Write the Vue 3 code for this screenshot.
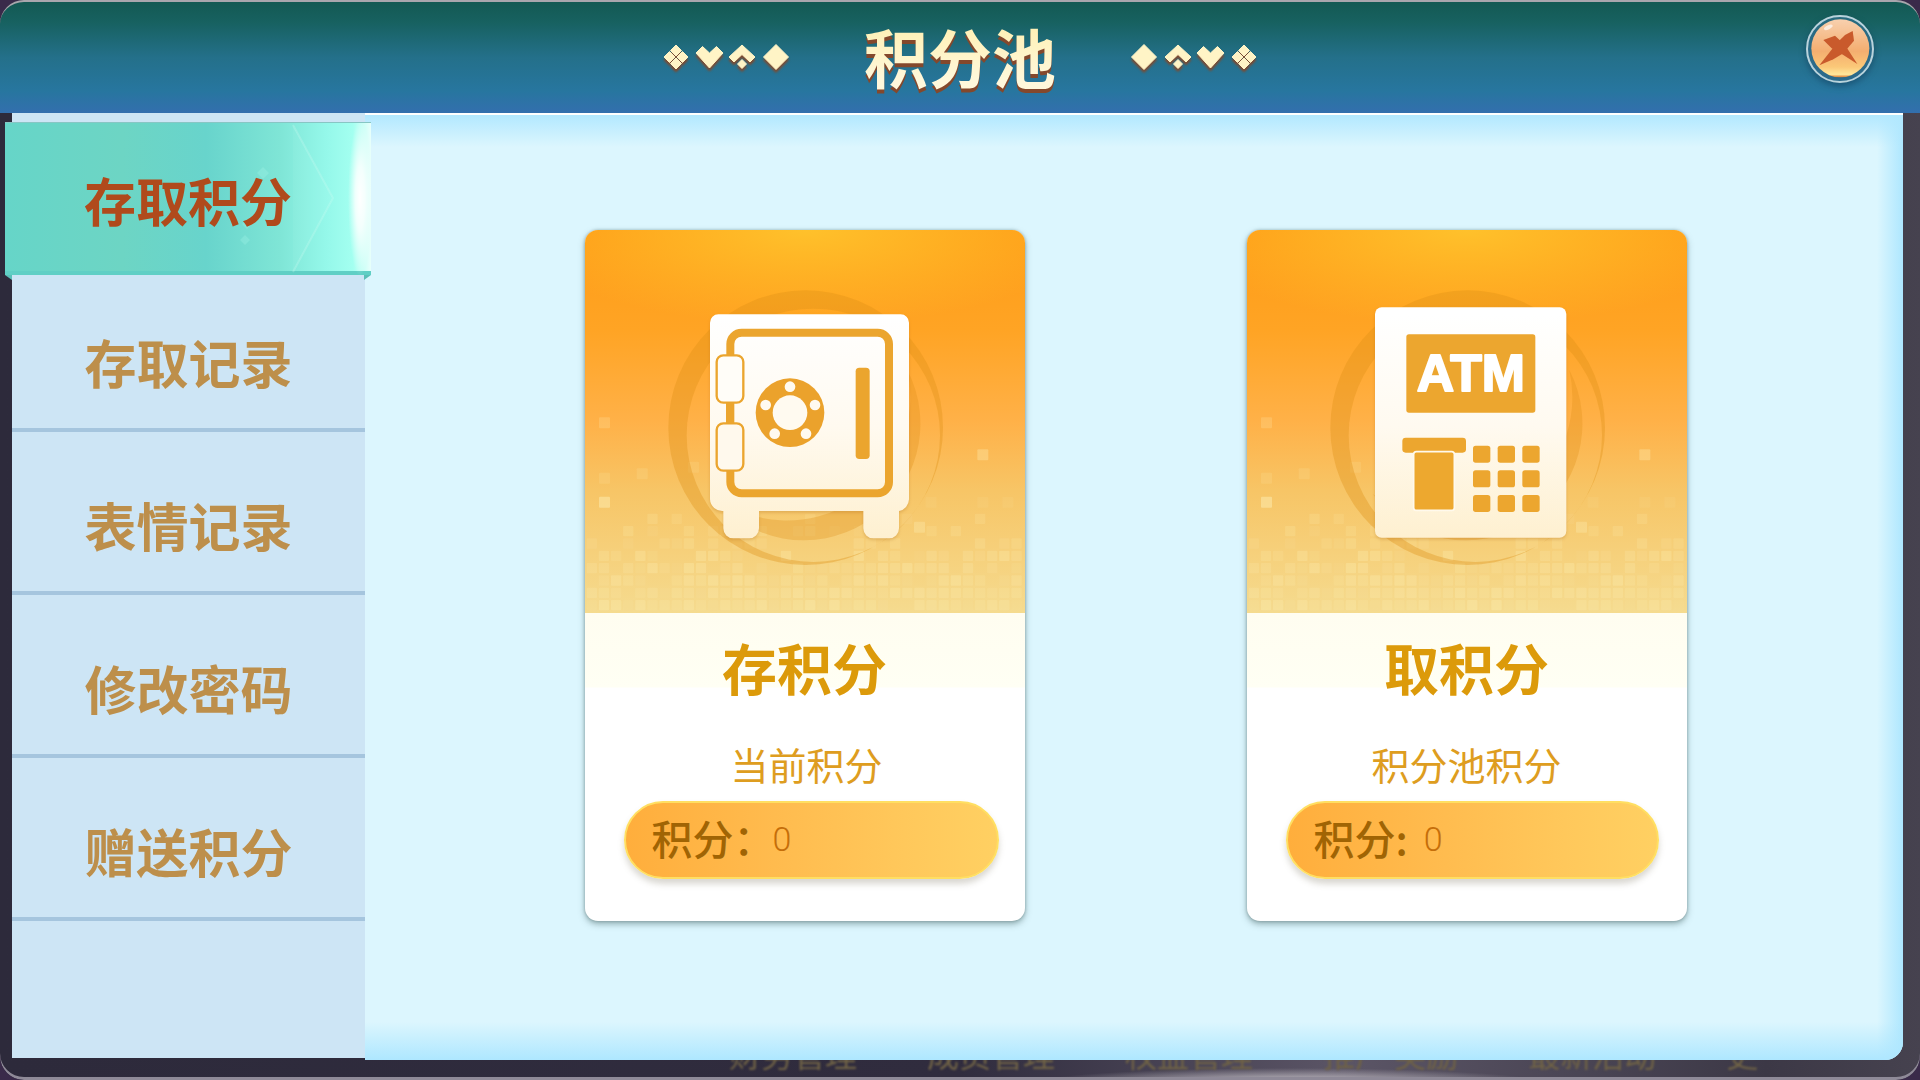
<script setup>
const navItems = ['存取记录', '表情记录', '修改密码', '赠送积分']
const underLabels = ['财务管理', '成员管理', '权益管理', '推广 奖励', '最新活动', '更']

let seed = 20231
function rnd() {
  seed = (seed * 16807) % 2147483647
  return seed / 2147483647
}
const pixels = []
for (let j = 0; j < 8; j++) {
  const y = 1140 - 37 * j
  const chance = j < 5 ? 0.92 - j * 0.06 : 0.46 - (j - 5) * 0.14
  for (let i = 0; i < 36; i++) {
    if (rnd() < chance) {
      pixels.push({
        x: 48 + 36.4 * i,
        y,
        s: 31,
        o: (0.06 + rnd() * (j < 5 ? 0.2 : 0.12)).toFixed(2)
      })
    }
  }
}
const sparse = [
  [85, 592, 0.2], [85, 758, 0.13], [85, 830, 0.42], [198, 745, 0.13],
  [352, 725, 0.12], [1220, 688, 0.3], [1030, 905, 0.28], [1065, 830, 0.08],
  [1220, 830, 0.08], [1295, 830, 0.08]
]
for (const [x, y, o] of sparse) pixels.push({ x, y, s: 33, o })

const dial = [[658, 500], [733, 555], [706, 641], [612, 641], [585, 555]]
const keyX = [728, 802, 876]
const keyY = [677, 751, 825]

const cards = [
  { key: 'save', title: '存积分', sub: '当前积分', colon: '：', cls: 'wide' },
  { key: 'take', title: '取积分', sub: '积分池积分', colon: ':', cls: 'tight' }
]
</script>

<template>
  <div class="page">
    <div class="under">
      <span v-for="label in underLabels" :key="label" class="under-label">{{ label }}</span>
    </div>

    <div class="window">
      <header class="header">
        <svg class="suits" width="126" height="28" viewBox="0 0 126 28">
          <g fill="#fff4c6" stroke="#fff4c6" stroke-width="1" stroke-linejoin="round">
            <path d="M13 1l5.500 5.500-5.500 5.500-5.500-5.500zM6.500 7.500l5.500 5.500-5.500 5.500-5.500-5.500zM19.500 7.500l5.500 5.500-5.500 5.500-5.500-5.500zM13 14l5.500 5.500-5.500 5.500-5.500-5.500z" />
            <path d="M33 9l6.500-6.500 7 6.500 7-6.500 6.500 6.500-13.500 15z" />
            <path d="M79 1l13 12-5 5-8-7.500-8 7.500-5-5zM79 15.500l4.500 4.500-4.500 4.500-4.500-4.500z" />
            <path d="M113 0.500l12.500 12.500-12.500 12.500-12.500-12.500z" />
          </g>
        </svg>
        <h1 class="title">积分池</h1>
        <svg class="suits" width="126" height="28" viewBox="0 0 126 28">
          <g fill="#fff4c6" stroke="#fff4c6" stroke-width="1" stroke-linejoin="round" transform="translate(126 0) scale(-1 1)">
            <path d="M13 1l5.500 5.500-5.500 5.500-5.500-5.500zM6.500 7.500l5.500 5.500-5.500 5.500-5.500-5.500zM19.500 7.500l5.500 5.500-5.500 5.500-5.500-5.500zM13 14l5.500 5.500-5.500 5.500-5.500-5.500z" />
            <path d="M33 9l6.500-6.500 7 6.500 7-6.500 6.500 6.500-13.500 15z" />
            <path d="M79 1l13 12-5 5-8-7.500-8 7.500-5-5zM79 15.500l4.500 4.500-4.500 4.500-4.500-4.500z" />
            <path d="M113 0.500l12.500 12.500-12.500 12.500-12.500-12.500z" />
          </g>
        </svg>

        <svg class="close" width="68" height="68" viewBox="78 45 204 204">
          <defs>
            <linearGradient id="closeDisc" x1="0" y1="0" x2="0" y2="1">
              <stop offset="0" stop-color="#f8d0ae" />
              <stop offset="0.55" stop-color="#f4ae70" />
              <stop offset="0.82" stop-color="#fbc878" />
              <stop offset="0.95" stop-color="#ffe79b" />
              <stop offset="1" stop-color="#d8762c" />
            </linearGradient>
          </defs>
          <circle cx="180" cy="147" r="99" fill="#3d7fa0" fill-opacity="0.55" stroke="#b9d3dc" stroke-width="6" />
          <circle cx="181" cy="145" r="87" fill="url(#closeDisc)" />
          <ellipse cx="145" cy="82" rx="14" ry="6" fill="#fff" fill-opacity="0.65" transform="rotate(-25 145 82)" />
          <path d="M130 120l35-13 30 28 37 57-42-27-35-20z" fill="#c95a2c" />
          <path d="M195 105l23-12 4 29-32 38-30 18-42 18 32-41 20-25z" fill="#c95a2c" />
        </svg>
      </header>

      <div class="body">
        <nav class="sidebar">
          <div class="tab">
            <svg class="tab-art" width="366" height="153" viewBox="0 0 366 153">
              <defs>
                <radialGradient id="tabGlow" cx="0.5" cy="0.5" r="0.5">
                  <stop offset="0" stop-color="#fff" />
                  <stop offset="0.4" stop-color="#fff" stop-opacity="0.8" />
                  <stop offset="1" stop-color="#fff" stop-opacity="0" />
                </radialGradient>
              </defs>
              <path d="M288 2l40 73-40 74" fill="none" stroke="#dffff8" stroke-opacity="0.22" stroke-width="2" />
              <path d="M288 2l40 73-40 74z" fill="#c0fff0" fill-opacity="0.08" />
              <path d="M258 44l6 6-6 6-6-6zM242 96l5 5-5 5-5-5zM240 112l5 5-5 5-5-5z" fill="#b5fff0" fill-opacity="0.22" />
              <ellipse cx="355" cy="75" rx="12" ry="78" fill="url(#tabGlow)" />
            </svg>
            <span class="tab-text">存取积分</span>
            <i class="fold fold-left"></i>
            <i class="fold fold-right"></i>
          </div>
          <div v-for="item in navItems" :key="item" class="nav-item">{{ item }}</div>
        </nav>

        <main class="main">
          <section v-for="card in cards" :key="card.key" class="card">
            <div class="art">
              <svg width="441" height="383" viewBox="43 30 1323 1149">
                <defs>
                  <linearGradient :id="'ivory-' + card.key" gradientUnits="userSpaceOnUse" x1="0" y1="283" x2="0" y2="955">
                    <stop offset="0" stop-color="#ffffff" />
                    <stop offset="0.5" stop-color="#fffaf0" />
                    <stop offset="1" stop-color="#fef0d0" />
                  </linearGradient>
                </defs>
                <rect v-for="(p, i) in pixels" :key="i" :x="p.x" :y="p.y" :width="p.s" :height="p.s" rx="3" fill="#fff6c0" :fill-opacity="p.o" />
                <path fill-rule="evenodd" fill="#dd9016" fill-opacity="0.36"
                  d="M293 623a412 412 0 1 0 824 0a412 412 0 1 0-824 0zM348 646a380 380 0 1 0 760 0a380 380 0 1 0-760 0z" />
                <path fill="#dd9016" fill-opacity="0.3" d="M1010 450A350 350 0 0 1 420 822A370 370 0 0 0 1010 450z" />

                <g v-if="card.key === 'save'" class="icon-shadow">
                  <path :fill="'url(#ivory-' + card.key + ')'"
                    d="M443 283h547a25 25 0 0 1 25 25v530a37 37 0 0 1-30 35v52a30 30 0 0 1-30 30h-47a30 30 0 0 1-30-30v-52h-313v52a30 30 0 0 1-30 30h-47a30 30 0 0 1-30-30v-52a37 37 0 0 1-40-35v-530a25 25 0 0 1 25-25z" />
                  <rect x="479" y="338" width="476" height="482" rx="34" :fill="'url(#ivory-' + card.key + ')'" stroke="#eba52e" stroke-width="24" />
                  <rect x="438" y="406" width="80" height="142" rx="20" fill="#fffdf8" stroke="#eba52e" stroke-width="7" />
                  <rect x="438" y="610" width="80" height="142" rx="20" fill="#fff9ed" stroke="#eba52e" stroke-width="7" />
                  <rect x="466" y="548" width="24" height="62" fill="#eba52e" />
                  <circle cx="658" cy="578" r="103" fill="#eba22c" />
                  <circle cx="658" cy="578" r="52" fill="#fffaf0" />
                  <circle v-for="(d, i) in dial" :key="i" :cx="d[0]" :cy="d[1]" r="16" fill="#fffaf0" />
                  <rect x="855" y="443" width="42" height="274" rx="11" fill="#eba52e" />
                </g>

                <g v-else class="icon-shadow" transform="translate(-7 0)">
                  <rect x="434" y="262" width="574" height="691" rx="20" :fill="'url(#ivory-' + card.key + ')'" />
                  <rect x="528" y="343" width="387" height="235" rx="8" fill="#eca62f" />
                  <text class="atm" x="559" y="513" textLength="325" lengthAdjust="spacingAndGlyphs">ATM</text>
                  <rect x="516" y="653" width="191" height="45" rx="10" fill="#eca62f" />
                  <rect x="550" y="695" width="122" height="176" rx="8" fill="#eda82f" stroke="#fff9ec" stroke-width="5" />
                  <template v-for="kx in keyX" :key="kx">
                    <rect v-for="ky in keyY" :key="ky" :x="kx" :y="ky" width="52" height="51" rx="8" fill="#eca62f" />
                  </template>
                </g>
              </svg>
            </div>

            <div class="lower">
              <h2 class="card-title">{{ card.title }}</h2>
              <p class="card-sub" :class="card.cls">{{ card.sub }}</p>
              <div class="pill" :class="card.cls">
                <span class="pill-label">积分{{ card.colon }}</span>
                <span class="pill-value">0</span>
              </div>
            </div>
          </section>
        </main>
      </div>
    </div>
  </div>
</template>

<style>
html, body { margin: 0; background: #2c2738; }
</style>

<style scoped>
* { box-sizing: border-box; }

.page {
  position: relative;
  width: 1920px;
  height: 1080px;
  overflow: hidden;
  background: #3a2a4a;
  font-family: "Noto Sans CJK SC", "Noto Sans", sans-serif;
}

.under {
  position: absolute;
  inset: 0;
  display: flex;
  align-items: flex-end;
  padding: 0 0 0 729px;
  gap: 70px;
  border-radius: 24px;
  background:
    radial-gradient(ellipse 260px 16px at 1290px 1084px, #d8d4d8, transparent),
    linear-gradient(90deg, #2d2a3b 0%, #302c3e 50%, #5b5566 70%, #3c3846 92%, #46424f 100%);
  box-shadow: inset 0 -3px 0 #8f8a98;
}

.under-label {
  height: 49px;
  font-size: 32px;
  line-height: 44px;
  white-space: pre;
  color: #6f6246;
  filter: blur(0.8px);
}

.window {
  position: relative;
  display: flex;
  flex-direction: column;
  height: 100%;
}

.header {
  position: relative;
  flex: none;
  display: flex;
  align-items: center;
  justify-content: center;
  gap: 75px;
  height: 113px;
  border-top: 2px solid #a9a6ad;
  border-radius: 24px 24px 0 0;
  background: linear-gradient(180deg, #135953 0%, #176160 18%, #24708a 50%, #27769f 80%, #336fae 100%);
}

.suits {
  flex: none;
  margin-top: 1px;
  filter: drop-shadow(0 3px 1px #7d4a30);
}

.title {
  margin: -6px 0 0;
  font-size: 64px;
  font-weight: 700;
  line-height: 76px;
  background: linear-gradient(180deg, #fff0b4 10%, #fff8dc 85%);
  -webkit-background-clip: text;
  background-clip: text;
  color: transparent;
  filter: drop-shadow(0 4px 0 #84482c);
}

.close {
  position: absolute;
  top: 13px;
  left: 1806px;
  filter: drop-shadow(0 3px 3px rgba(10, 40, 70, 0.55));
}

.body {
  flex: 1;
  min-height: 0;
  display: flex;
  padding: 0 17px 20px 12px;
}

.sidebar {
  flex: none;
  width: 353px;
  margin-bottom: 2px;
  padding-top: 9px;
  background: #cde5f5;
}

.tab {
  position: relative;
  z-index: 1;
  display: flex;
  align-items: center;
  justify-content: center;
  width: 366px;
  height: 153px;
  margin: 0 -6px -6px -7px;
  padding-top: 5px;
  border-top: 1px solid #87c6c4;
  border-bottom: 4px solid #60cfc5;
  background: linear-gradient(90deg, #66d5c8 0%, #6dd5c4 32%, #68d4cc 55%, #7fe5d6 75%, #95f8ea 88%, #a3fff0 95%, #e8fffb 100%);
}

.tab-art {
  position: absolute;
  top: 0;
  left: 0;
}

.tab-text {
  position: relative;
  font-size: 52px;
  font-weight: 700;
  line-height: 60px;
  color: #b04a1c;
}

.fold {
  position: absolute;
  bottom: -9px;
  width: 7px;
  height: 5px;
  background: #5bbfb8;
}

.fold-left { left: 0; clip-path: polygon(0 0, 100% 0, 100% 100%); }
.fold-right { right: 0; clip-path: polygon(0 0, 100% 0, 0 100%); }

.nav-item {
  height: 163px;
  padding-top: 63px;
  border-bottom: 4px solid #a5c5de;
  font-size: 52px;
  font-weight: 700;
  line-height: 60px;
  text-align: center;
  color: #bd8f4b;
}

.main {
  flex: 1;
  display: flex;
  justify-content: center;
  gap: 222px;
  padding: 115px 0 0 3px;
  border-top: 2px solid #fff;
  border-radius: 0 0 18px 0;
  background:
    linear-gradient(180deg, #b2e8ff 0, rgba(220, 246, 254, 0) 32px),
    linear-gradient(0deg, #aee7ff 0, rgba(220, 246, 254, 0) 38px),
    linear-gradient(270deg, #aee7ff 0, rgba(220, 246, 254, 0) 26px),
    #dcf6fe;
}

.card {
  flex: none;
  width: 440px;
  height: 691px;
  overflow: hidden;
  border-radius: 13px;
  background: #fff;
  box-shadow: 0 3px 6px rgba(70, 100, 100, 0.5), 0 0 3px rgba(70, 100, 100, 0.4);
}

.art {
  height: 383px;
  background:
    radial-gradient(ellipse 290px 95px at 50% 0, #ffc12b 0%, rgba(255, 190, 40, 0) 100%),
    linear-gradient(180deg, #ff9c17 0%, #ffa424 26%, #ffb148 50%, #f7c566 68%, #f5db8f 100%);
}

.art svg { display: block; }

.icon-shadow { filter: drop-shadow(0 5px 5px rgba(170, 100, 20, 0.28)); }

.atm {
  font-family: "Liberation Sans", sans-serif;
  font-size: 158px;
  font-weight: 700;
  fill: #fff;
  stroke: #fff;
  stroke-width: 6px;
  stroke-linejoin: round;
}

.lower {
  display: flex;
  flex-direction: column;
  align-items: center;
  background: linear-gradient(180deg, #fffdf0 0, #fffff4 74px, #fff 75px);
}

.card-title {
  margin: 13px 0 0;
  font-size: 55px;
  font-weight: 700;
  line-height: 80px;
  color: #dc9a0a;
}

.card-sub {
  margin: 33px 0 0;
  font-size: 38px;
  font-weight: 400;
  line-height: 50px;
  color: #de9d20;
}

.card-sub.wide { transform: translateX(2px); }

.pill {
  align-self: flex-start;
  display: flex;
  align-items: center;
  width: 375px;
  height: 78px;
  margin: 12px 0 0 39px;
  padding-left: 26px;
  border: 2px solid #ffdf62;
  border-radius: 39px;
  background: linear-gradient(90deg, #ffae3c 0%, #ffbb4e 40%, #ffc85b 75%, #ffd062 100%);
  box-shadow: 0 5px 6px rgba(120, 110, 90, 0.28);
}

.pill.tight {
  width: 373px;
  margin-left: 39px;
}

.pill-label {
  margin-bottom: 6px;
  font-size: 41px;
  font-weight: 500;
  line-height: 60px;
  color: #a06404;
}

.pill-value {
  margin-bottom: 2px;
  font-family: Roboto, sans-serif;
  font-size: 34px;
  font-weight: 300;
  line-height: 60px;
  color: #c56e0a;
}

.pill.wide .pill-value { margin-left: -2px; }
.pill.tight .pill-value { margin-left: 16px; }
</style>
